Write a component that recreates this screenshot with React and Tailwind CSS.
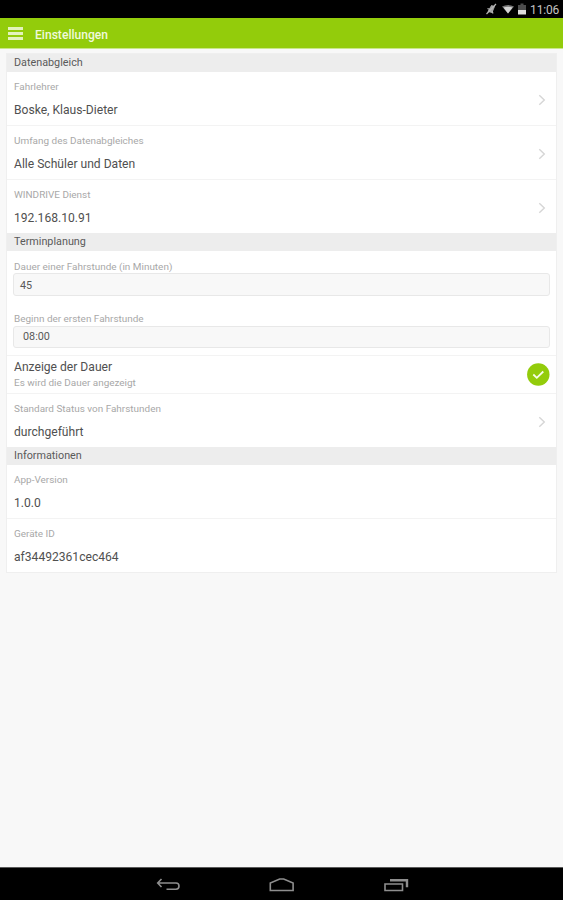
import React from 'react';

function SectionHeader({ title }) {
  return (
    <div className="flex h-[18px] items-center bg-[#ededed] px-[7px] pt-px text-[10.8px] leading-none text-[#5a5a5a]">
      {title}
    </div>
  );
}

function Chevron() {
  return (
    <svg className="h-3 w-2 shrink-0" viewBox="0 0 8 12" fill="none" stroke="#d6d6d6" strokeWidth="1.4">
      <path d="M1.3 1.2 6.3 6 1.3 10.8" />
    </svg>
  );
}

function Label({ children }) {
  return <p className="text-[9.95px] leading-[12px] text-[#a8a8a8]">{children}</p>;
}

function SettingRow({ label, value, link, last }) {
  return (
    <div className={`flex justify-between pt-[9px] pr-[10px] pl-[7px] ${last ? 'h-[53px]' : 'h-[54px] border-b border-[#f3f3f3]'}`}>
      <div>
        <Label>{label}</Label>
        <p className="mt-[9px] text-[12.1px] leading-[16px] text-[#505050]">{value}</p>
      </div>
      {link ? (
        <div className="pt-[13px]">
          <Chevron />
        </div>
      ) : null}
    </div>
  );
}

function InputRow({ label, value, className, inputClassName }) {
  return (
    <div className={`px-[6px] ${className}`}>
      <div className="pl-px">
        <Label>{label}</Label>
      </div>
      <div className={`flex items-center rounded-[3px] border border-[#e8e8e8] bg-[#f8f8f8] text-[10.8px] leading-none text-[#5a5a5a] ${inputClassName}`}>
        {value}
      </div>
    </div>
  );
}

function StatusBar() {
  return (
    <div className="flex h-[18px] items-center justify-end bg-black pr-[4px] text-[#c4c4c4]">
      <svg className="mr-[5px] h-3 w-[11px]" viewBox="0 0 11 12" fill="none" stroke="#b5b5b5">
        <path d="M2 8.5 5.5 2.5 8.5 3.5 6 9.5Z" fill="#a0a0a0" strokeWidth="0.8" />
        <path d="M.5 11 10 1M6 8l1 2.5M1.5 5.5l2.5 1" strokeWidth="1.2" />
      </svg>
      <svg className="mr-[4px] h-3 w-3" viewBox="0 0 12 12">
        <path d="M0 3.5Q6 .3 12 3.5L6 10.5Z" fill="#777777" />
        <path d="M1.5 4.6Q6 2.8 10.5 4.6L6 10.5Z" fill="#d4d4d4" />
      </svg>
      <svg className="mr-[4px] h-3 w-2" viewBox="0 0 8 12">
        <path d="M0 2h2.5V.5h3V2H8v5H0Z" fill="#4c4c4c" />
        <path d="M0 7h8v4.5H0Z" fill="#dddddd" />
      </svg>
      <span className="mt-px text-[12px] leading-none tracking-[-0.2px]">11:06</span>
    </div>
  );
}

function NavBar() {
  return (
    <div className="h-[33px] border-t border-[#5a5a5a] bg-black">
      <svg className="block h-8 w-full" viewBox="0 0 563 32" fill="none" stroke="#8e8e8e" strokeWidth="1.6">
        <path d="M161.5 11 157.7 15l3.8 4M158 15h18q3 0 3 3.1t-3 3.1H166.5" />
        <path d="M270.3 22.5v-7.5l9.4-4h4l9.4 4v7.5Z" />
        <path d="M385 16h17.5v6.5H385Z" />
        <path d="M390 12.2h17v7" strokeWidth="2.4" />
      </svg>
    </div>
  );
}

export default function App() {
  return (
    <div className="flex h-[900px] w-[563px] flex-col overflow-hidden bg-[#f8f8f8] font-[Roboto,sans-serif]">
      <StatusBar />
      <header className="flex h-[31px] items-center border-b border-[#c9e789] bg-[#93cc0b] pl-2">
        <div className="flex w-[15px] flex-col gap-[2px]">
          <span className="h-[3px] bg-[#e3f3bd]" />
          <span className="h-[3px] bg-[#e3f3bd]" />
          <span className="h-[3px] bg-[#e3f3bd]" />
        </div>
        <h1 className="mt-[4px] ml-[12px] text-[12.1px] font-medium text-[#f0f9dc]">Einstellungen</h1>
      </header>

      <main className="flex-1 px-[6px] pt-[4px]">
        <div className="border border-[#efefef] bg-white">
          <SectionHeader title="Datenabgleich" />
          <SettingRow label="Fahrlehrer" value="Boske, Klaus-Dieter" link />
          <SettingRow label="Umfang des Datenabgleiches" value="Alle Schüler und Daten" link />
          <SettingRow label="WINDRIVE Dienst" value="192.168.10.91" link last />

          <SectionHeader title="Terminplanung" />
          <InputRow label="Dauer einer Fahrstunde (in Minuten)" value="45" className="h-[52px] pt-[10px]" inputClassName="h-[23px] pl-[6px] pt-[3px]" />
          <InputRow label="Beginn der ersten Fahrstunde" value="08:00" className="h-[53px] border-b border-[#f3f3f3] pt-[10px]" inputClassName="mt-px h-[22px] pl-[9px]" />
          <div className="flex h-[38px] items-center justify-between border-b border-[#f3f3f3] pr-[6px] pl-[7px]">
            <div>
              <p className="-mt-px text-[12.1px] leading-[16px] text-[#505050]">Anzeige der Dauer</p>
              <div className="mt-[2px]">
                <Label>Es wird die Dauer angezeigt</Label>
              </div>
            </div>
            <svg className="size-[23px]" viewBox="0 0 23 23" fill="none">
              <circle cx="11.3" cy="11.5" r="11.2" fill="#93cc0b" />
              <path d="m6.3 11.5 3.5 3.3 6.5-6.3" stroke="#f6fce9" strokeWidth="1.8" />
            </svg>
          </div>
          <SettingRow label="Standard Status von Fahrstunden" value="durchgeführt" link last />

          <SectionHeader title="Informationen" />
          <SettingRow label="App-Version" value="1.0.0" />
          <SettingRow label="Geräte ID" value="af34492361cec464" last />
        </div>
      </main>

      <NavBar />
    </div>
  );
}
